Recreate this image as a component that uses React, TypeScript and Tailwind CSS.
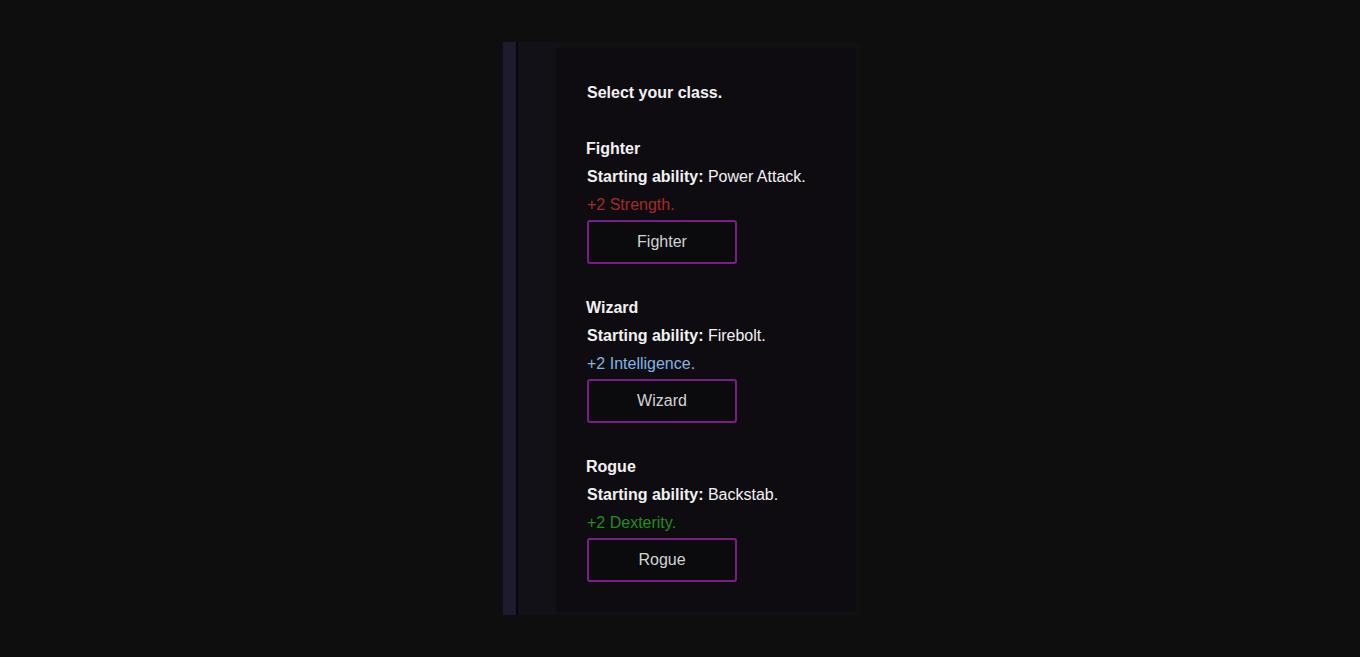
const classes = [
  { name: "Fighter", ability: "Power Attack.", bonus: "+2 Strength.", color: "text-[#a52a2a]" },
  { name: "Wizard", ability: "Firebolt.", bonus: "+2 Intelligence.", color: "text-[#7fb5e6]" },
  { name: "Rogue", ability: "Backstab.", bonus: "+2 Dexterity.", color: "text-[#228b22]" },
];

export default function App() {
  return (
    <div className="flex min-h-screen justify-center bg-[#0e0e0e] pt-[42px] font-['Liberation_Sans',Arial,sans-serif] text-[16px] leading-[28px] text-[#f2f2f2]">
      <div className="ml-[3px] flex h-[573px]">
        <div className="w-[13px] bg-[#1f1b2e]" />
        <div className="w-[2px] bg-[#060608]" />
        <div className="w-[38px] bg-[#131118]" />
        <div className="w-[304px] bg-[#111013] pt-[6px] pr-[4px] pb-[3px]">
          <div className="h-full bg-[#0f0c11] pl-[31px] pt-[31px]">
            <p className="font-bold">Select your class.</p>
            <div className="mt-[28px] flex flex-col gap-[30px]">
              {classes.map((c) => (
                <div key={c.name}>
                  <h3 className="-ml-px font-bold">{c.name}</h3>
                  <p>
                    <span className="font-bold">Starting ability:</span> {c.ability}
                  </p>
                  <p className={c.color}>{c.bonus}</p>
                  <button className="mt-px flex h-[44px] w-[150px] items-center justify-center rounded-[3px] border-2 border-[#7b1d86] bg-[#0b0a0d] text-[#d4d4d4]">
                    {c.name}
                  </button>
                </div>
              ))}
            </div>
          </div>
        </div>
      </div>
    </div>
  );
}
